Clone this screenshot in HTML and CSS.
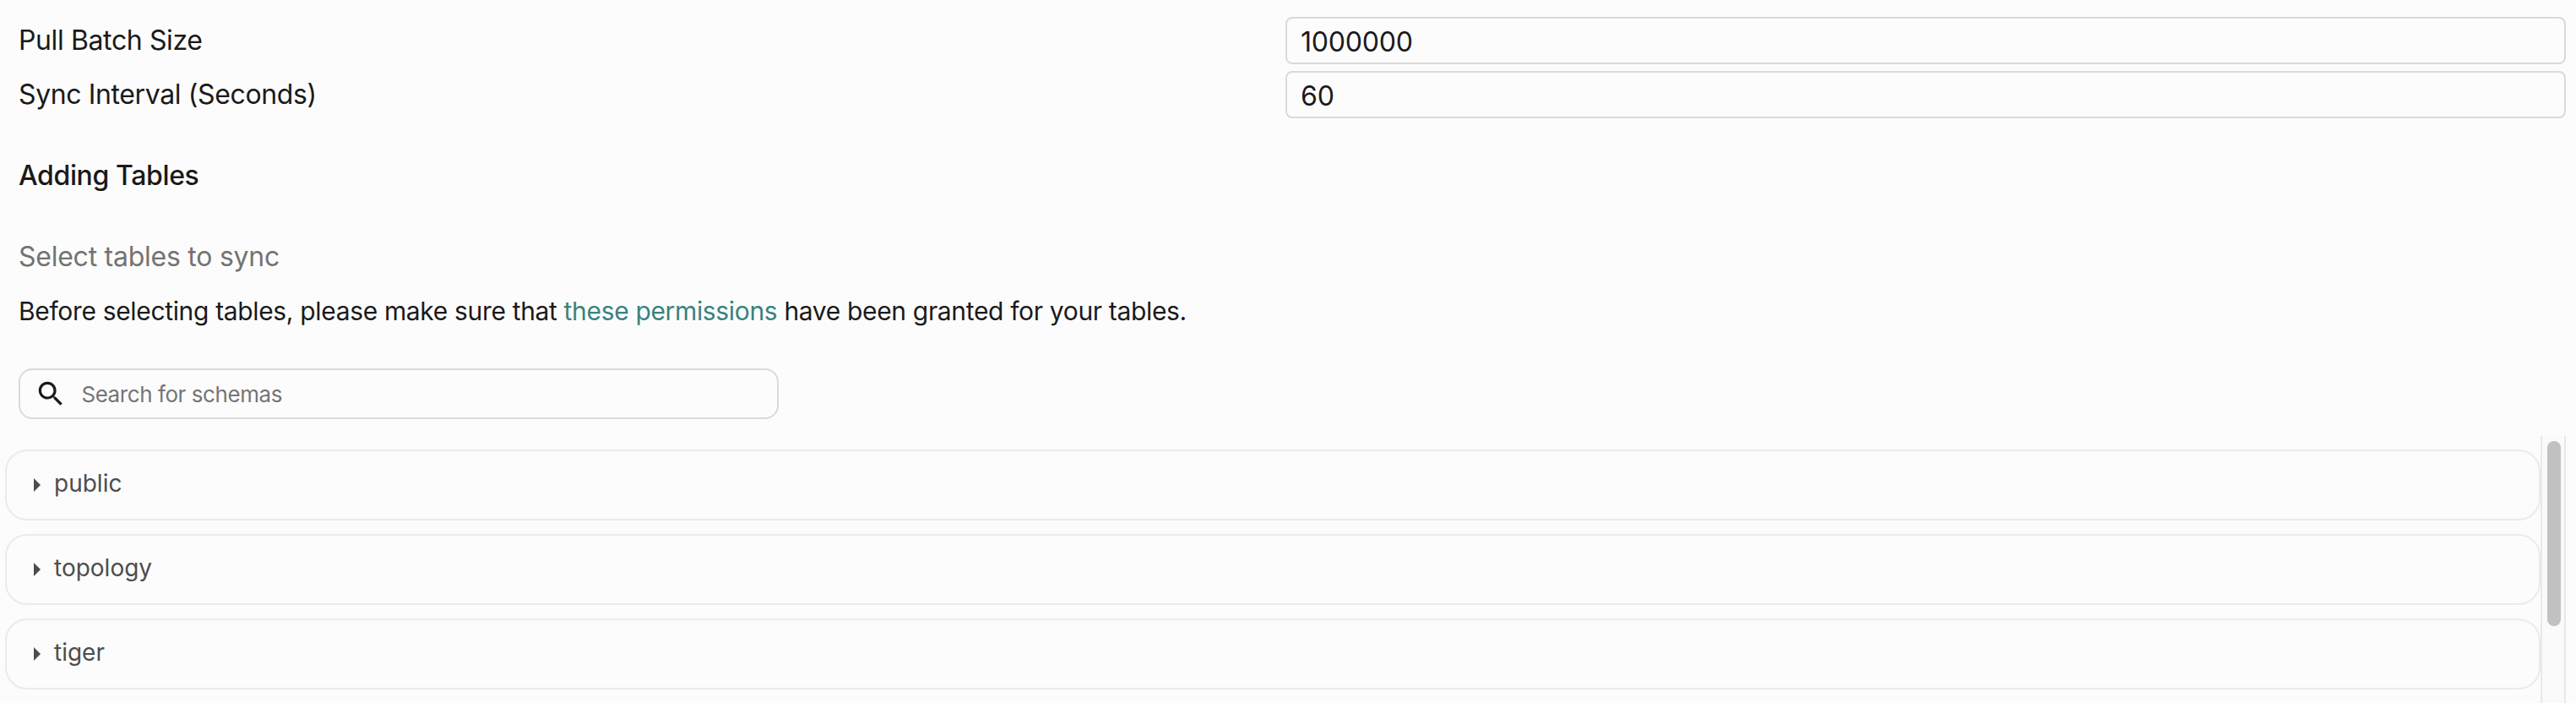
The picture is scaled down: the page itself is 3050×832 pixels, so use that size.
FILE: index.html
```html
<!DOCTYPE html>
<html lang="en">
<head>
<meta charset="utf-8">
<title>Adding Tables</title>
<link rel="stylesheet" href="styles.css">
</head>
<body>
<main class="page">
  <section class="settings">
    <div class="field"><label class="label" for="batch">Pull Batch Size</label><input class="input" id="batch" value="1000000"></div>
    <div class="field"><label class="label" for="interval">Sync Interval (Seconds)</label><input class="input" id="interval" value="60"></div>
  </section>
  <section class="intro">
    <h2 class="title">Adding Tables</h2>
    <p class="subtitle">Select tables to sync</p>
    <p class="note">Before selecting tables, please make sure that <a class="link">these permissions</a> have been granted for your tables.</p>
    <div class="search">
      <svg class="search-icon" viewBox="0 0 24 24"><path d="M15.5 14h-.79l-.28-.27C15.41 12.59 16 11.11 16 9.5 16 5.91 13.09 3 9.5 3S3 5.91 3 9.5 5.91 16 9.5 16c1.61 0 3.09-.59 4.23-1.57l.27.28v.79l5 4.99L20.49 19l-4.99-5zm-6 0C7.01 14 5 11.99 5 9.5S7.01 5 9.5 5 14 7.01 14 9.5 11.99 14 9.5 14z"/></svg>
      <input class="search-input" placeholder="Search for schemas">
    </div>
  </section>
  <section class="schemas">
    <div class="list">
      <div class="card"><svg class="arrow" viewBox="0 0 8 16"><path d="M0 0l8 8-8 8z"/></svg><span class="name">public</span></div>
      <div class="card"><svg class="arrow" viewBox="0 0 8 16"><path d="M0 0l8 8-8 8z"/></svg><span class="name">topology</span></div>
      <div class="card"><svg class="arrow" viewBox="0 0 8 16"><path d="M0 0l8 8-8 8z"/></svg><span class="name">tiger</span></div>
    </div>
    <div class="track"><div class="thumb"></div></div>
  </section>
</main>
</body>
</html>
```

FILE: styles.css
```css
* { box-sizing: border-box; }
body { margin: 0; background: #fcfcfc; color: #1a1a1a; font-family: Inter, sans-serif; font-size: 32px; }
.page { height: 832px; overflow: hidden; display: flex; flex-direction: column; }
.settings { padding: 20px 12px 0 22px; display: flex; flex-direction: column; gap: 8px; }
.field { display: flex; justify-content: space-between; height: 56px; }
.label { line-height: 56px; letter-spacing: -0.38px; }
.input { width: 1516px; height: 56px; border: 2px solid #dadada; border-radius: 8px; background: transparent; padding: 2px 16px 0; font: inherit; letter-spacing: -0.2px; color: inherit; outline: none; }
.intro { padding: 48px 0 0 22px; height: 376px; }
.title { margin: 0; font-size: 32px; font-weight: 500; line-height: 40px; letter-spacing: -0.37px; }
.subtitle { margin: 56px 0 0; line-height: 40px; color: #737373; letter-spacing: -0.25px; }
.note { margin: 24px 0 0; font-size: 30px; line-height: 40px; white-space: nowrap; letter-spacing: -0.34px; }
.link { color: #38837f; }
.search { margin-top: 48px; width: 900px; height: 60px; border: 2px solid #dadada; border-radius: 16px; display: flex; align-items: center; padding: 0 17px; }
.search-icon { width: 38.4px; height: 38.4px; flex: none; fill: #1a1a1a; }
.search-input { flex: 1; margin-left: 17px; padding: 0; border: 0; background: none; outline: none; font: 26px Inter, sans-serif; letter-spacing: -0.43px; }
.search-input::placeholder { color: #757575; opacity: 1; }
.schemas { flex: 1; display: flex; padding: 0 12px 0 6px; }
.list { flex: 1; padding-top: 16px; display: flex; flex-direction: column; gap: 16px; }
.card { height: 84px; border: 2px solid #eaeaf1; border-radius: 26px; display: flex; align-items: center; padding-left: 32px; color: #4d4d4d; font-size: 28px; }
.arrow { width: 8px; height: 16px; flex: none; fill: currentColor; }
.name { margin: 0 0 4px 16px; }
.track { width: 30px; border: solid #e8e8e8; border-width: 0 2px; background: #fafafa; padding: 6px 4px 0 6px; }
.thumb { width: 16px; height: 219px; border-radius: 8px; background: #c1c1c1; }
```
